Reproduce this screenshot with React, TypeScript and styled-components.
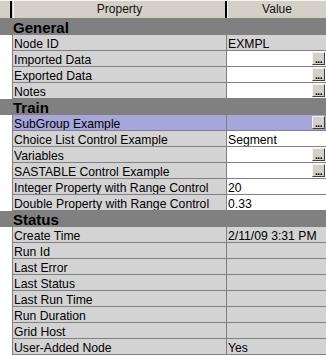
import React from "react";
import styled, { createGlobalStyle } from "styled-components";

const GlobalStyle = createGlobalStyle`
  html, body {
    margin: 0;
    padding: 0;
    background: #fff;
  }
  body {
    font-family: "Liberation Sans", Arial, sans-serif;
    color: #000;
  }
`;

type Row = {
  name: string;
  value?: string;
  editable?: boolean;
  button?: boolean;
  selected?: boolean;
};

type Section = { title: string; rows: Row[] };

const sections: Section[] = [
  {
    title: "General",
    rows: [
      { name: "Node ID", value: "EXMPL" },
      { name: "Imported Data", editable: true, button: true },
      { name: "Exported Data", editable: true, button: true },
      { name: "Notes", editable: true, button: true },
    ],
  },
  {
    title: "Train",
    rows: [
      { name: "SubGroup Example", button: true, selected: true },
      { name: "Choice List Control Example", value: "Segment", editable: true },
      { name: "Variables", editable: true, button: true },
      { name: "SASTABLE Control Example", editable: true, button: true },
      { name: "Integer Property with Range Control", value: "20", editable: true },
      { name: "Double Property with Range Control", value: "0.33", editable: true },
    ],
  },
  {
    title: "Status",
    rows: [
      { name: "Create Time", value: "2/11/09 3:31 PM" },
      { name: "Run Id" },
      { name: "Last Error" },
      { name: "Last Status" },
      { name: "Last Run Time" },
      { name: "Run Duration" },
      { name: "Grid Host" },
      { name: "User-Added Node", value: "Yes" },
    ],
  },
];

const Grid = styled.div`
  width: 326px;
  height: 355px;
  overflow: hidden;
  background: #fff;
`;

const HeaderRow = styled.div`
  display: grid;
  grid-template-columns: 13px 214px 1fr;
  height: 19px;
  background: #d4d0c8;
  border-top: 1px solid #f4f4f4;
  border-bottom: 1px solid #808080;
  box-sizing: border-box;
`;

const HeaderGutter = styled.div`
  border-right: 2px solid #000;
  margin-right: 1px;
`;

const HeaderCell = styled.div<{ $last?: boolean }>`
  font-size: 12px;
  line-height: 17px;
  text-align: center;
  color: #111;
  border-right: ${(p) => (p.$last ? "none" : "2px solid #000")};
  border-left: 1px solid #f4f4f4;
`;

const SectionRow = styled.div`
  height: 16px;
  box-sizing: border-box;
  background: #808080;
  padding-left: 13px;
  padding-top: 2px;
  font-size: 15px;
  font-weight: bold;
  line-height: 14px;
`;

const DataRow = styled.div`
  display: grid;
  grid-template-columns: 13px 214px 1fr;
  height: 16px;
  position: relative;
`;

const Gutter = styled.div`
  background: #fff;
  border-right: 1px solid #808080;
`;

const Cell = styled.div<{ $bg: string; $divider?: boolean }>`
  display: flex;
  align-items: flex-start;
  box-sizing: border-box;
  height: 16px;
  background: ${(p) => p.$bg};
  border-bottom: 1px solid #808080;
  border-right: ${(p) => (p.$divider ? "1px solid #808080" : "none")};
  padding-left: 1px;
  font-size: 12.2px;
  white-space: nowrap;
  overflow: hidden;
`;

const CellText = styled.span`
  flex: 1;
  line-height: 13px;
  padding-top: 3px;
  overflow: hidden;
`;

const DotsButton = styled.div`
  width: 13px;
  height: 13px;
  margin: 1px 1px 0 0;
  box-sizing: border-box;
  background: #d4d0c8;
  border: 1px solid;
  border-color: #f0f0f0 #404040 #404040 #f0f0f0;
  display: flex;
  align-items: flex-end;
  justify-content: center;
  font-size: 10px;
  font-weight: bold;
  line-height: 8px;
  letter-spacing: -0.5px;
  color: #000;
`;

const GRAY = "#d3d3d3";
const WHITE = "#ffffff";
const SELECTED = "#a6a6da";

function PropertyRow({ row }: { row: Row }) {
  const nameBg = row.selected ? SELECTED : GRAY;
  const valueBg = row.selected ? SELECTED : row.editable ? WHITE : GRAY;
  return (
    <DataRow>
      <Gutter />
      <Cell $bg={nameBg} $divider>
        <CellText>{row.name}</CellText>
      </Cell>
      <Cell $bg={valueBg}>
        <CellText>{row.value ?? ""}</CellText>
        {row.button && <DotsButton>...</DotsButton>}
      </Cell>
    </DataRow>
  );
}

export default function App() {
  return (
    <>
      <GlobalStyle />
      <Grid>
        <HeaderRow>
          <HeaderGutter />
          <HeaderCell>Property</HeaderCell>
          <HeaderCell $last>Value</HeaderCell>
        </HeaderRow>
        {sections.map((section) => (
          <React.Fragment key={section.title}>
            <SectionRow>{section.title}</SectionRow>
            {section.rows.map((row) => (
              <PropertyRow key={row.name} row={row} />
            ))}
          </React.Fragment>
        ))}
      </Grid>
    </>
  );
}
